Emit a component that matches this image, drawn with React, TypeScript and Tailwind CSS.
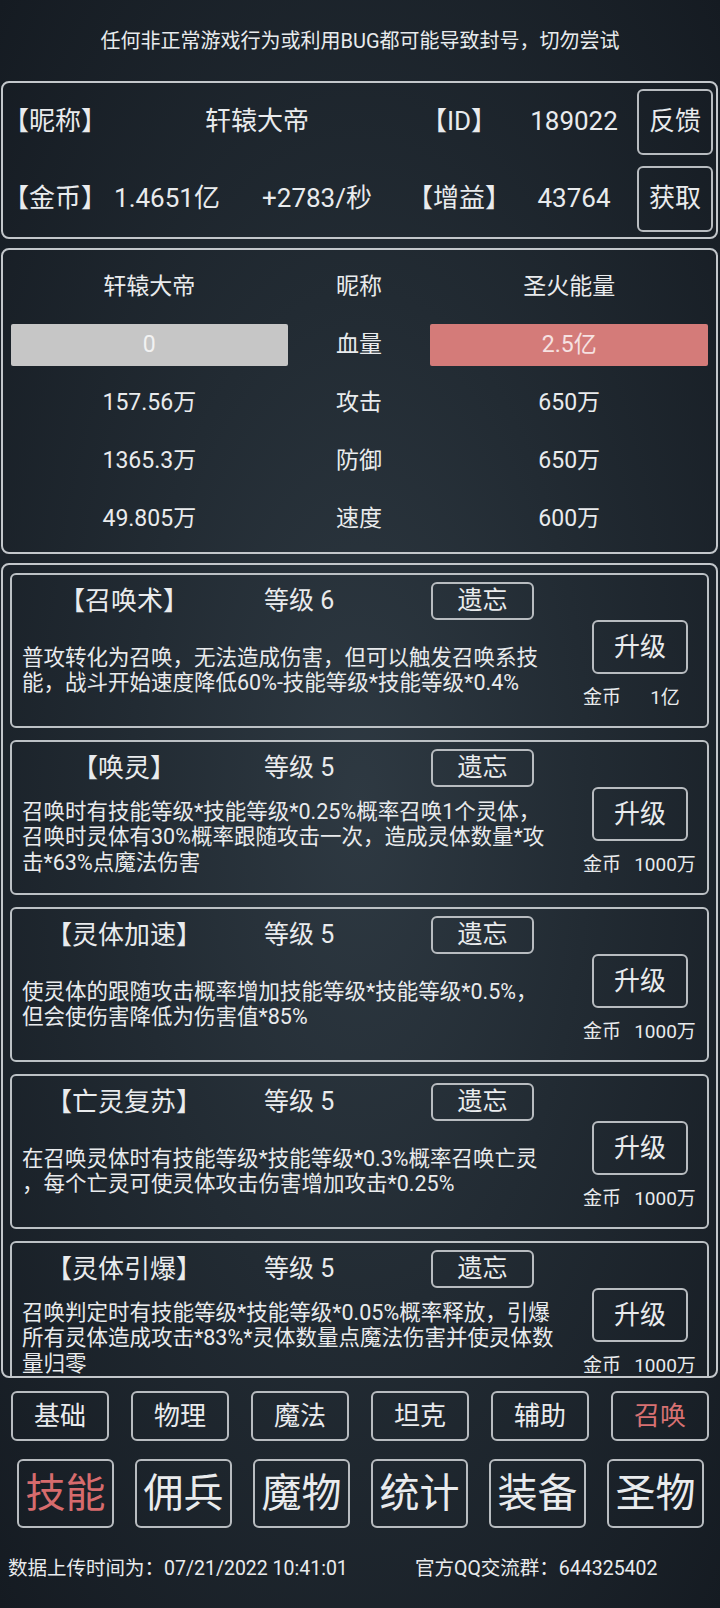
import React from 'react';

interface Skill {
  name: string;
  level: number;
  lines: string[];
  cost: string;
}

const skills: Skill[] = [
  {
    name: '【召唤术】',
    level: 6,
    lines: ['普攻转化为召唤，无法造成伤害，但可以触发召唤系技', '能，战斗开始速度降低60%-技能等级*技能等级*0.4%'],
    cost: '1亿',
  },
  {
    name: '【唤灵】',
    level: 5,
    lines: [
      '召唤时有技能等级*技能等级*0.25%概率召唤1个灵体，',
      '召唤时灵体有30%概率跟随攻击一次，造成灵体数量*攻',
      '击*63%点魔法伤害',
    ],
    cost: '1000万',
  },
  {
    name: '【灵体加速】',
    level: 5,
    lines: ['使灵体的跟随攻击概率增加技能等级*技能等级*0.5%，', '但会使伤害降低为伤害值*85%'],
    cost: '1000万',
  },
  {
    name: '【亡灵复苏】',
    level: 5,
    lines: ['在召唤灵体时有技能等级*技能等级*0.3%概率召唤亡灵', '，每个亡灵可使灵体攻击伤害增加攻击*0.25%'],
    cost: '1000万',
  },
  {
    name: '【灵体引爆】',
    level: 5,
    lines: [
      '召唤判定时有技能等级*技能等级*0.05%概率释放，引爆',
      '所有灵体造成攻击*83%*灵体数量点魔法伤害并使灵体数',
      '量归零',
    ],
    cost: '1000万',
  },
];

const stats = [
  { left: '157.56万', label: '攻击', right: '650万' },
  { left: '1365.3万', label: '防御', right: '650万' },
  { left: '49.805万', label: '速度', right: '600万' },
];

const subTabs = ['基础', '物理', '魔法', '坦克', '辅助', '召唤'];
const mainTabs = ['技能', '佣兵', '魔物', '统计', '装备', '圣物'];

const SkillCard: React.FC<{ skill: Skill }> = ({ skill }) => (
  <div className="flex h-[155px] shrink-0 rounded-[6px] border-2 border-[#bcc1c5]">
    <div className="flex w-[571px] flex-col">
      <div className="flex h-[52px] items-center text-[25px]">
        <div className="w-[224px] text-center text-[26px]">{skill.name}</div>
        <div className="ml-[28px] w-[167px]">等级 {skill.level}</div>
        <div className="flex h-[38px] w-[103px] items-center justify-center rounded-[6px] border-2 border-[#b8bcc0] text-[25px]">
          遗忘
        </div>
      </div>
      <div className="flex flex-1 flex-col justify-center pb-[13px] pl-[10px] text-[21.5px] leading-[25.5px]">
        {skill.lines.map((l, i) => (
          <div key={i} className="whitespace-nowrap">
            {l}
          </div>
        ))}
      </div>
    </div>
    <div className="flex flex-1 flex-col pt-[45px]">
      <div className="ml-[9px] flex h-[54px] w-[96px] items-center justify-center rounded-[6px] border-2 border-[#b8bcc0] text-[26px]">
        升级
      </div>
      <div className="mt-[12px] flex h-[24px] items-center text-[19px]">
        <span className="w-[40px]">金币</span>
        <span className="w-[84px] text-center">{skill.cost}</span>
      </div>
    </div>
  </div>
);

export default function App() {
  return (
    <div className="h-[1608px] w-[720px] overflow-hidden bg-[radial-gradient(ellipse_at_50%_50%,#2e3942_0%,#222b33_45%,#151b22_100%)] font-[family-name:Roboto,'Noto_Sans_CJK_SC',sans-serif] text-[#e9ebed]">
      <div className="flex h-[81px] items-center justify-center text-[20px]">
        任何非正常游戏行为或利用BUG都可能导致封号，切勿尝试
      </div>

      {/* player info */}
      <div className="ml-[1px] w-[717px] rounded-[8px] border-2 border-[#c3c7cb] text-[26px]">
        <div className="flex h-[77px] items-center">
          <div className="w-[104px] text-center">【昵称】</div>
          <div className="w-[300px] text-center">轩辕大帝</div>
          <div className="w-[104px] text-center">【ID】</div>
          <div className="w-[126px] text-center">189022</div>
          <div className="flex h-[66px] w-[76px] items-center justify-center rounded-[6px] border-2 border-[#b8bcc0]">
            反馈
          </div>
        </div>
        <div className="flex h-[77px] items-center">
          <div className="w-[104px] text-center">【金币】</div>
          <div className="w-[120px] text-center">1.4651亿</div>
          <div className="w-[180px] text-center">+2783/秒</div>
          <div className="w-[104px] text-center">【增益】</div>
          <div className="w-[126px] text-center">43764</div>
          <div className="flex h-[66px] w-[76px] items-center justify-center rounded-[6px] border-2 border-[#b8bcc0]">
            获取
          </div>
        </div>
      </div>

      {/* battle stats */}
      <div className="ml-[1px] mt-[9px] w-[717px] rounded-[8px] border-2 border-[#c3c7cb] px-[8px] pb-[4px] pt-[8px] text-[23px]">
        <div className="flex h-[58px] items-center">
          <div className="w-[277px] text-center">轩辕大帝</div>
          <div className="w-[143px] text-center">昵称</div>
          <div className="w-[278px] text-center">圣火能量</div>
        </div>
        <div className="flex h-[58px] items-center">
          <div className="flex h-[42px] w-[277px] items-center justify-center rounded-[2px] bg-[#c6c6c6] text-[#f2f2f2]">
            0
          </div>
          <div className="w-[143px] text-center">血量</div>
          <div className="flex h-[42px] w-[278px] items-center justify-center rounded-[2px] bg-[#d47b79] text-[#f6e2e2]">
            2.5亿
          </div>
        </div>
        {stats.map((s) => (
          <div key={s.label} className="flex h-[58px] items-center">
            <div className="w-[277px] text-center">{s.left}</div>
            <div className="w-[143px] text-center">{s.label}</div>
            <div className="w-[278px] text-center">{s.right}</div>
          </div>
        ))}
      </div>

      {/* skill list */}
      <div className="ml-[1px] mt-[9px] flex h-[815px] w-[717px] flex-col gap-[12px] overflow-hidden rounded-[8px] border-2 border-[#c3c7cb] px-[7px] pt-[8px]">
        {skills.map((s) => (
          <SkillCard key={s.name} skill={s} />
        ))}
      </div>

      <div className="ml-[11px] mt-[13px] flex gap-[22px] text-[26px]">
        {subTabs.map((t) => (
          <div
            key={t}
            className={`flex h-[50px] w-[98px] items-center justify-center rounded-[6px] border-2 border-[#b8bcc0] ${
              t === '召唤' ? 'text-[#d87172]' : ''
            }`}
          >
            {t}
          </div>
        ))}
      </div>

      <div className="ml-[17px] mt-[18px] flex gap-[21px] text-[40px]">
        {mainTabs.map((t) => (
          <div
            key={t}
            className={`flex h-[69px] w-[97px] items-center justify-center rounded-[6px] border-2 border-[#b8bcc0] ${
              t === '技能' ? 'text-[#d66b6d]' : ''
            }`}
          >
            {t}
          </div>
        ))}
      </div>

      <div className="mt-[29px] flex h-[24px] items-center text-[19.5px]">
        <span className="ml-[8px] w-[407px]">数据上传时间为：07/21/2022 10:41:01</span>
        <span>官方QQ交流群：644325402</span>
      </div>
    </div>
  );
}
